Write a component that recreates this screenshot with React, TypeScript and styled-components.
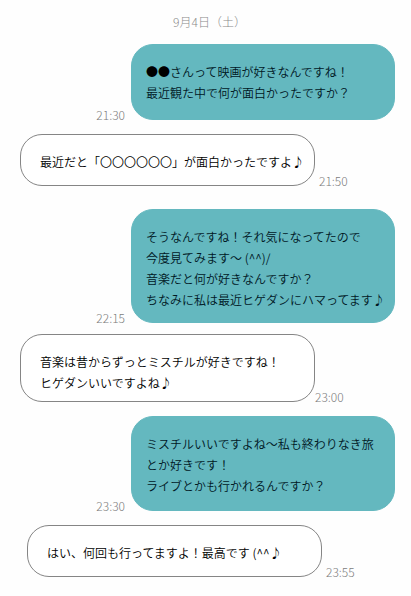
import React from "react";
import styled, { createGlobalStyle } from "styled-components";

const GlobalStyle = createGlobalStyle`
  body {
    margin: 0;
    background: #fefefe;
    font-family: "Noto Sans CJK JP", "Noto Sans", sans-serif;
  }
`;

const Chat = styled.main`
  padding: 12px 16px 16px 20px;
`;

const DateHeading = styled.h1`
  margin: 0 0 12px;
  padding-left: 4px;
  font-size: 12px;
  line-height: 20px;
  font-weight: 300;
  text-align: center;
  color: #8a8a8a;
`;

const Thread = styled.ol`
  margin: 0;
  padding: 0;
  list-style: none;
`;

const Row = styled.li<{ $sent: boolean; $after: number; $indent: number }>`
  display: flex;
  flex-direction: ${(p) => (p.$sent ? "row-reverse" : "row")};
  align-items: flex-end;
  margin-bottom: ${(p) => p.$after}px;
  padding-left: ${(p) => p.$indent}px;
`;

const Bubble = styled.p<{ $sent: boolean; $bottom: number }>`
  box-sizing: border-box;
  flex: 0 1 ${(p) => (p.$sent ? 264 : 295)}px;
  margin: 0;
  padding: 16px 0 ${(p) => p.$bottom}px ${(p) => (p.$sent ? 14 : 19)}px;
  border: 1px solid ${(p) => (p.$sent ? "#64b8bf" : "#858585")};
  border-radius: 22px;
  background: ${(p) => (p.$sent ? "#64b8bf" : "#ffffff")};
  color: ${(p) => (p.$sent ? "#00171f" : "#000000")};
  font-size: 12px;
  line-height: 21px;
  font-weight: 350;
`;

const Line = styled.span`
  display: block;
  white-space: nowrap;
`;

const Mask = styled.span`
  color: #000000;
`;

const Time = styled.time<{ $gap: number }>`
  margin: 0 ${(p) => p.$gap}px;
  font-size: 12px;
  line-height: 10px;
  font-weight: 300;
  color: #7c7c7c;
`;

type Message = {
  sent: boolean;
  time: string;
  lines: React.ReactNode[];
  bottom: number;
  after: number;
  gap: number;
  indent?: number;
};

const messages: Message[] = [
  {
    sent: true,
    time: "21:30",
    lines: [
      <>
        <Mask>●●</Mask>さんって映画が好きなんですね！
      </>,
      "最近観た中で何が面白かったですか？",
    ],
    bottom: 16,
    after: 14,
    gap: 6,
  },
  {
    sent: false,
    time: "21:50",
    lines: ["最近だと「〇〇〇〇〇〇」が面白かったですよ♪"],
    bottom: 13,
    after: 23,
    gap: 4,
  },
  {
    sent: true,
    time: "22:15",
    lines: [
      "そうなんですね！それ気になってたので",
      "今度見てみます～ (^^)/",
      "音楽だと何が好きなんですか？",
      "ちなみに私は最近ヒゲダンにハマってます♪",
    ],
    bottom: 12,
    after: 11,
    gap: 6,
  },
  {
    sent: false,
    time: "23:00",
    lines: ["音楽は昔からずっとミスチルが好きですね！", "ヒゲダンいいですよね♪"],
    bottom: 8,
    after: 14,
    gap: 0,
  },
  {
    sent: true,
    time: "23:30",
    lines: ["ミスチルいいですよね～私も終わりなき旅", "とか好きです！", "ライブとかも行かれるんですか？"],
    bottom: 14,
    after: 14,
    gap: 6,
  },
  {
    sent: false,
    time: "23:55",
    lines: ["はい、何回も行ってますよ！最高です (^^♪"],
    bottom: 13,
    after: 0,
    gap: 4,
    indent: 7,
  },
];

export default function App() {
  return (
    <>
      <GlobalStyle />
      <Chat>
        <DateHeading>9月4日（土）</DateHeading>
        <Thread>
          {messages.map((m) => (
            <Row key={m.time} $sent={m.sent} $after={m.after} $indent={m.indent ?? 0}>
              <Bubble $sent={m.sent} $bottom={m.bottom}>
                {m.lines.map((line, i) => (
                  <Line key={i}>{line}</Line>
                ))}
              </Bubble>
              <Time $gap={m.gap}>{m.time}</Time>
            </Row>
          ))}
        </Thread>
      </Chat>
    </>
  );
}
